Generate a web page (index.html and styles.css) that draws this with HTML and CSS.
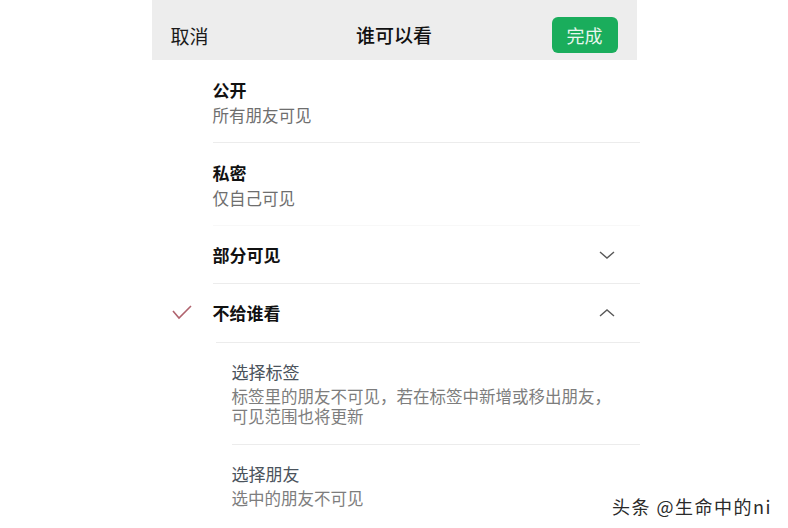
FILE: index.html
```html
<!DOCTYPE html>
<html lang="zh-CN">
<head>
<meta charset="utf-8">
<title>谁可以看</title>
<link rel="stylesheet" href="styles.css">
</head>
<body>
<div class="phone">
  <header class="nav">
    <span class="nav-cancel">取消</span>
    <span class="nav-title">谁可以看</span>
    <span class="nav-done">完成</span>
  </header>
  <ul class="options">
    <li class="option">
      <div class="gutter"></div>
      <div class="body">
        <div class="opt-title">公开</div>
        <div class="opt-sub">所有朋友可见</div>
      </div>
    </li>
    <li class="option">
      <div class="gutter"></div>
      <div class="body no-line">
        <div class="opt-title">私密</div>
        <div class="opt-sub">仅自己可见</div>
      </div>
    </li>
    <li class="option">
      <div class="gutter"></div>
      <div class="body row">
        <div class="opt-title">部分可见</div>
        <svg class="chev" width="16" height="10" viewBox="0 0 16 10"><polyline points="1,2 8,8 15,2" fill="none" stroke="#595959" stroke-width="1.4"/></svg>
      </div>
    </li>
    <li class="option">
      <div class="gutter">
        <svg class="check" width="20" height="16" viewBox="0 0 20 16"><polyline points="1,6 7,13 19,1" fill="none" stroke="#b0636e" stroke-width="1.6"/></svg>
      </div>
      <div class="body row sub-line">
        <div class="opt-title">不给谁看</div>
        <svg class="chev" width="16" height="10" viewBox="0 0 16 10"><polyline points="1,8 8,2 15,8" fill="none" stroke="#595959" stroke-width="1.4"/></svg>
      </div>
    </li>
    <li class="sub-option">
      <div class="sub-title">选择标签</div>
      <div class="sub-desc">标签里的朋友不可见，若在标签中新增或移出朋友，<br>可见范围也将更新</div>
    </li>
    <li class="sub-option last">
      <div class="sub-title">选择朋友</div>
      <div class="sub-desc">选中的朋友不可见</div>
    </li>
  </ul>
</div>
<div class="watermark">头条 @生命中的ni</div>
</body>
</html>
```
FILE: styles.css
```css
html, body {
  margin: 0;
  padding: 0;
  background: #ffffff;
  font-family: "Noto Sans CJK SC", "Noto Sans", sans-serif;
  height: 528px;
  overflow: hidden;
}
.phone {
  width: 485px;
  margin: 0 auto;
  position: relative;
}
.nav {
  height: 60px;
  background: #ededed;
  display: flex;
  align-items: center;
  justify-content: space-between;
  padding: 0 19px 0 19px;
  box-sizing: border-box;
  position: relative;
}
.nav-cancel {
  font-size: 19px;
  color: #1a1a1a;
  padding-top: 10px;
}
.nav-title {
  position: absolute;
  left: 0;
  right: 0;
  top: 0;
  height: 60px;
  line-height: 70px;
  text-align: center;
  font-size: 19px;
  font-weight: 500;
  color: #111;
  pointer-events: none;
}
.nav-done {
  margin-top: 10px;
  width: 66px;
  height: 36px;
  line-height: 36px;
  text-align: center;
  background: #1aad5c;
  color: #e8f6ee;
  font-size: 18px;
  border-radius: 6px;
}
.options {
  list-style: none;
  margin: 0;
  padding: 0;
}
.option {
  display: flex;
}
.gutter {
  width: 61px;
  flex: none;
  display: flex;
  align-items: center;
  justify-content: flex-start;
}
.check {
  margin-left: 20px;
}
.body {
  flex: 1;
  padding: 19px 0 16px;
  border-bottom: 1px solid #ececec;
  margin-right: -3px;
}
.body.no-line {
  border-bottom-color: #f8f8f8;
}
.body.row {
  height: 58px;
  padding: 0 25px 0 0;
  box-sizing: border-box;
  display: flex;
  align-items: center;
  justify-content: space-between;
}
.body.sub-line {
  border-bottom: none;
}
.opt-title {
  font-size: 17px;
  line-height: 22px;
  font-weight: 700;
  color: #111;
}
.opt-sub {
  margin-top: 3px;
  font-size: 16.5px;
  line-height: 22px;
  color: #6e6e6e;
}
.sub-option {
  margin-left: 64px;
  padding: 18px 0 18px 16px;
  border-top: 1px solid #ececec;
  margin-right: -3px;
}
.sub-option + .sub-option {
  margin-left: 80px;
  padding-left: 0;
}
.sub-title {
  font-size: 17px;
  line-height: 22px;
  color: #4b535c;
}
.sub-desc {
  margin-top: 3px;
  font-size: 16.5px;
  line-height: 20px;
  color: #7d7d7d;
}
.watermark {
  position: absolute;
  left: 612px;
  top: 494px;
  font-size: 18px;
  line-height: 24px;
  color: #2a2a2a;
  font-family: "Noto Sans CJK SC", sans-serif;
  text-shadow: 1px 1px 0 #fff, -1px -1px 0 #fff, 1px -1px 0 #fff, -1px 1px 0 #fff;
  letter-spacing: 1.5px;
}
```
